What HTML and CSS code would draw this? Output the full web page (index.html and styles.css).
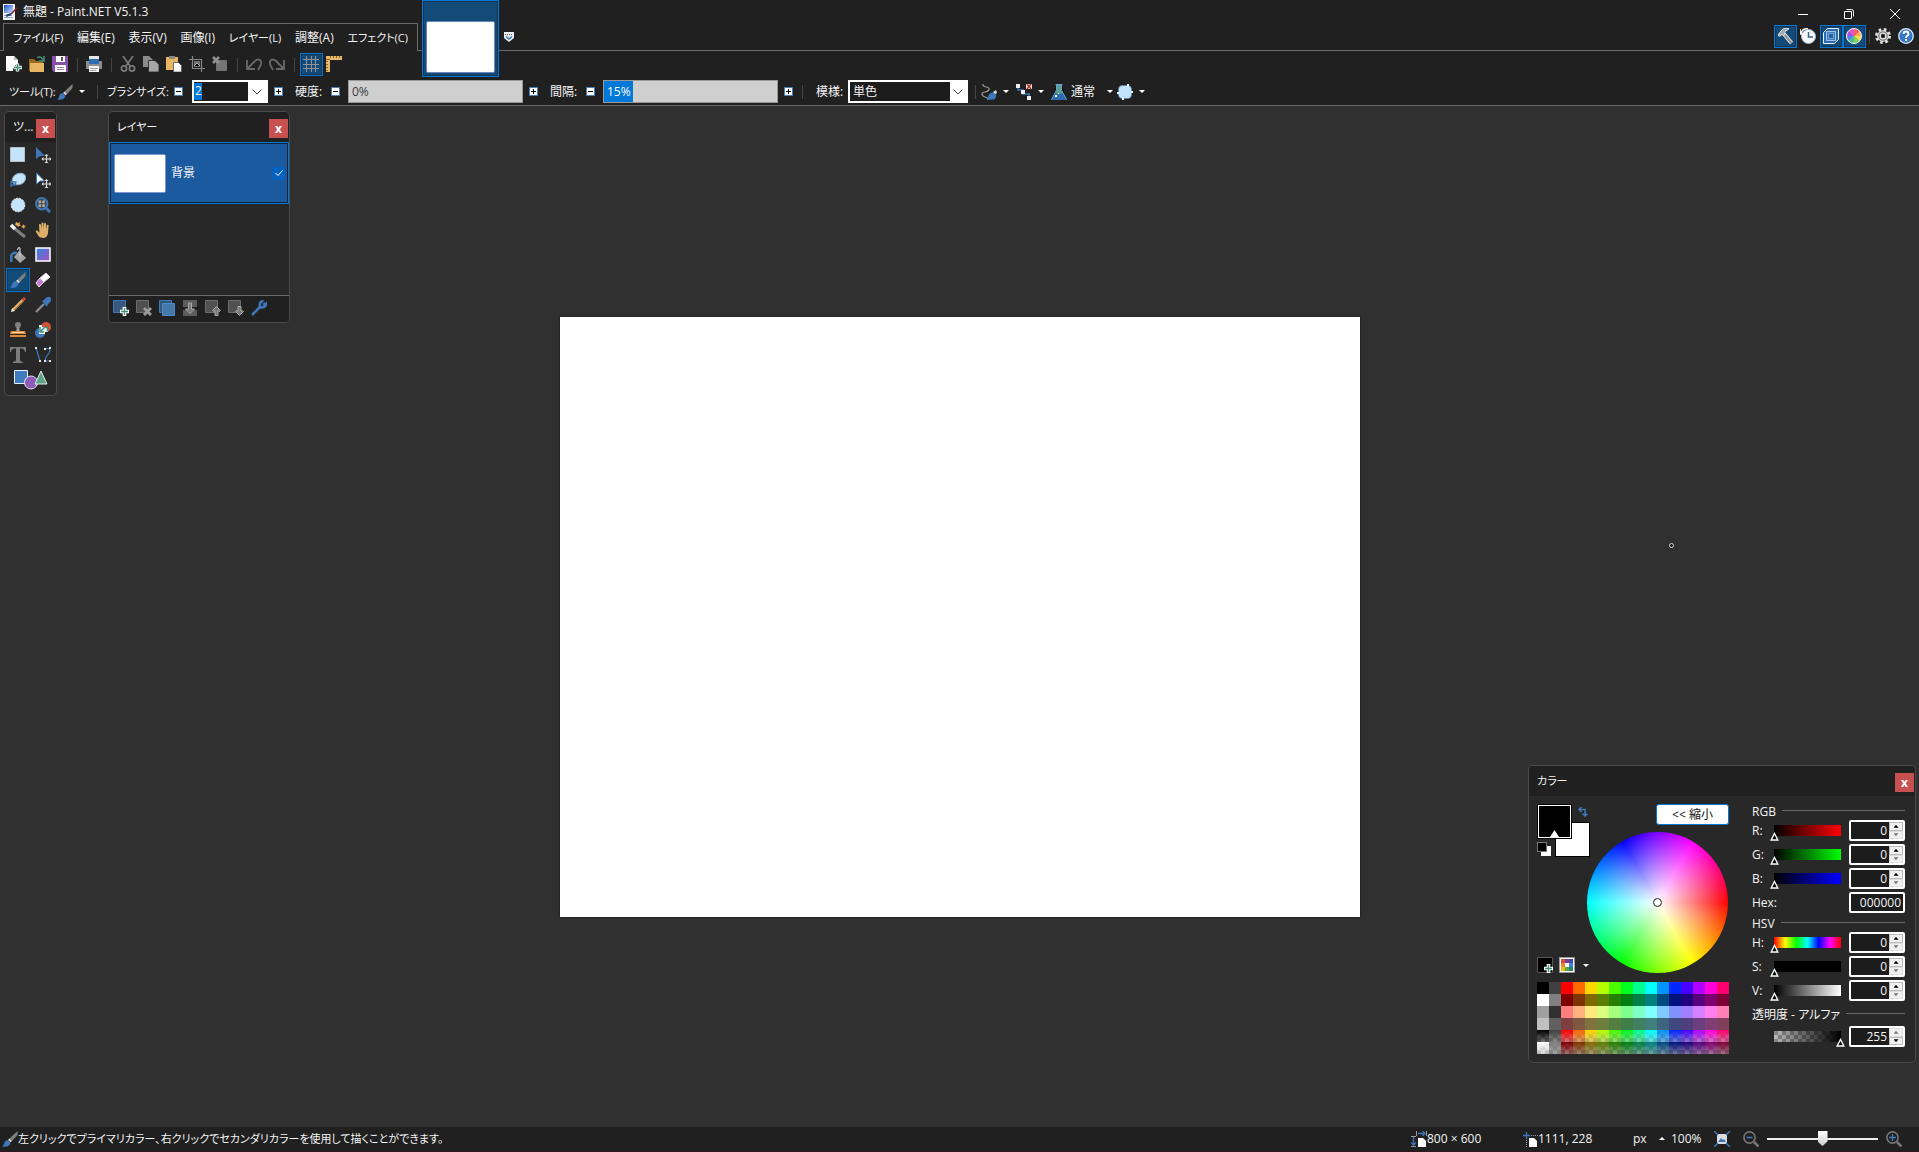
FILE: index.html
```html
<!DOCTYPE html>
<html lang="ja">
<head>
<meta charset="utf-8">
<title>無題 - Paint.NET V5.1.3</title>
<link rel="stylesheet" href="styles.css">
</head>
<body>
<svg class="sprite" aria-hidden="true">
  <defs>
    <linearGradient id="grad-sky" x1="0" y1="0" x2="1" y2="1"><stop offset="0" stop-color="#1b4fd0"/><stop offset="1" stop-color="#cfe4ff"/></linearGradient>
    <linearGradient id="grad-fill" x1="0" y1="0" x2="1" y2="1"><stop offset="0" stop-color="#2f86e0"/><stop offset="1" stop-color="#a94fc0"/></linearGradient>
  </defs>
  <symbol id="app" viewBox="0 0 16 16"><path fill="#f4f4f4" d="M1 0h12v16H1z"/><path fill="url(#grad-sky)" d="M2 1h9v8H2z"/><path fill="#9aa7c4" d="M2 11h8v1H2zM2 13h9v1H2z"/><path stroke="#8d1f24" stroke-width="1.6" d="M15 4L9 10"/><path stroke="#1c3f7c" stroke-width="2" d="M9 10l-5 2"/></symbol>
  <symbol id="new" viewBox="0 0 16 16"><path fill="#fff" d="M0 0h8l4 4v5H9v3H7v3H0z"/><path fill="#bbb" d="M8 0v4h4z"/><path stroke="#f4f4f4" stroke-width="3.4" d="M11.500 7.500v8M7.500 11.500h8.500"/><path stroke="#3e9079" stroke-width="1.400" d="M11.500 8v7M8 11.500h7.500"/></symbol>
  <symbol id="open" viewBox="0 0 16 16"><path fill="#9a6a1c" d="M0 3h5l2 2h7v10H0z"/><path fill="#e8b565" d="M1 7h14v9H1z"/><path fill="none" stroke="#3e9079" stroke-width="1.5" d="M8 1.500c3-1 5 0 6 2.500M15 0v5h-5"/></symbol>
  <symbol id="save" viewBox="0 0 16 16"><path fill="#8a4fa8" d="M0 0h16v16H2l-2-2z"/><path fill="#fff" d="M4 0h9v6H4zM3 9h11v7H3z"/><path fill="#555" d="M9 1h2v4H9z"/><path stroke="#9c8aa8" d="M5 11.500h7M5 13.500h7"/></symbol>
  <symbol id="print" viewBox="0 0 16 16"><path fill="#e8e8e8" d="M3 0h10v4H3z"/><path fill="#8e8e8e" d="M0 5h16v8H0z"/><path fill="#2d6fb6" d="M3 3h10v5H3z"/><path fill="#f5f5f5" d="M3 10h10v6H3z"/><path stroke="#a0a0a0" d="M4 12.500h8M4 14.500h6"/></symbol>
  <symbol id="cut" viewBox="0 0 16 16"><g fill="none" stroke="#777" stroke-width="1.800"><path d="M3 0l7 10M13 0L6 10"/><circle cx="4" cy="12.500" r="2.600"/><circle cx="12" cy="12.500" r="2.600"/></g></symbol>
  <symbol id="copy" viewBox="0 0 16 16"><path fill="#8b8b8b" d="M0 0h6l4 4v7H0z"/><path fill="#a6a6a6" stroke="#202020" stroke-width=".8" d="M5.500 4.500H12l4 4V16H5.500z"/></symbol>
  <symbol id="paste" viewBox="0 0 16 16"><path fill="#e8b565" d="M0 1h12v13H0z"/><path fill="#888" d="M3 0h6v3H3z"/><path fill="#fff" stroke="#555" stroke-width=".8" d="M7.500 6.500h5l3 3V16h-8z"/></symbol>
  <symbol id="crop" viewBox="0 0 16 16"><path fill="none" stroke="#858585" stroke-width="1.200" d="M3.500 0v12.500H16M0 3.500h12.500V16"/><path fill="#6f6f6f" d="M5 5h6v6H5z"/><path stroke="#aaa" d="M5 10l3-3 3 3"/></symbol>
  <symbol id="deselect" viewBox="0 0 16 16"><path fill="#767676" stroke="#999" stroke-dasharray="1 1" d="M4.500 4.500h10v10h-10z"/><path stroke="#909090" stroke-width="2.600" d="M1 1l6 6M7 1L1 7"/></symbol>
  <symbol id="undo" viewBox="0 0 16 16"><path fill="none" stroke="#686868" stroke-width="1.800" d="M1 4v9h8M1.500 12.500L9 5c3-3 7-1 6 3-.5 2-2 4-3 6"/></symbol>
  <symbol id="redo" viewBox="0 0 16 16"><path fill="none" stroke="#686868" stroke-width="1.800" d="M15 4v9H7M14.500 12.500L7 5C4 2 0 4 1 8c.5 2 2 4 3 6"/></symbol>
  <symbol id="grid" viewBox="0 0 16 16"><path stroke="#8f9396" d="M3.500 0v16M8.500 0v16M12.500 0v16M0 3.500h16M0 8.500h16M0 12.500h16"/></symbol>
  <symbol id="ruler" viewBox="0 0 16 16"><path fill="#e8b96c" d="M0 0h16v4H4v12H0z"/><path stroke="#856425" d="M4.500 0v2M7.500 0v2M10.500 0v2M13.500 0v2M0 5.500h2M0 8.500h2M0 11.500h2M0 14.500h2M0 3.500h4"/></symbol>
  <symbol id="brush" viewBox="0 0 16 16"><path fill="#808080" d="M15.500 0v4L10 10 7.500 7.500z"/><path fill="#d9d9d9" d="M7.500 7.500L10 10l-1.500 1.200L6 9z"/><path fill="#3e78b8" d="M5.800 9.300l2.600 2.400C8 15 4 16.500 0 15.500c2-.8 1.500-2.300 2.500-4.300.8-1.400 2.200-2 3.300-1.900z"/></symbol>
  <symbol id="curve" viewBox="0 0 16 16"><path fill="none" stroke="#999" stroke-width="1.200" d="M2 0C1 4 9 2 8 5.500S0 7 1 10.500s5 1.500 6 4.500"/><path fill="#3e78b8" d="M6 16c1-5 3-8 6.500-7.500S16 14 13 15.500z"/><path fill="#ddd" d="M12 8l3-2 1 3-2 1z"/></symbol>
  <symbol id="nodes" viewBox="0 0 16 16"><path fill="none" stroke="#3e78b8" stroke-width="1.500" d="M2 2v4h5v4h6v4"/><path fill="#eee" d="M0 0h4v4H0zM5 6h4v4H5zM11 12h4v4h-4z"/><path fill="#f4dedb" d="M10 0h6v5h-6z"/><path stroke="#a83a30" stroke-width="1.500" d="M11 0l4 5M15 0l-4 5"/></symbol>
  <symbol id="flask" viewBox="0 0 16 16"><path fill="#5aa38a" d="M6 1h4v5l3 5H3l3-5z"/><path fill="#2d6bb0" d="M4 9l4 1 4-1 4 7H0z"/><path stroke="#67a6e0" d="M4.500.5h7M5.500 1v5L.5 15.500M10.500 1v5l5 9.500"/><path fill="#fff" d="M4 11h2v2H4zM7 9h1v1H7z"/></symbol>
  <symbol id="blob" viewBox="0 0 16 16"><rect x="1.500" y="1.500" width="13" height="13" rx="4" fill="#c0e2fb" stroke="#4f86b8" stroke-dasharray="2 1"/><path fill="#f5fbff" d="M10 0h2v2h-2zM5 14h2v2H5zM0 8h2v2H0zM14 7h2v2h-2z"/></symbol>
  <symbol id="hammer" viewBox="0 0 16 16"><path stroke="#eee" stroke-width="4" d="M7 6l7.500 9"/><path stroke="#8e8e8e" stroke-width="2.200" d="M7 6l7.500 9"/><path fill="#a9a9a9" stroke="#f2f2f2" stroke-width=".9" d="M1 7l3-4C6 0 9 0 12 .8L7.500 4l1 2-2 1.500L5 6 3 8.500z"/></symbol>
  <symbol id="history" viewBox="0 0 16 16"><circle cx="8.500" cy="8.500" r="7" fill="#f6f8fb" stroke="#9fb7d6"/><path fill="none" stroke="#3f5f86" stroke-width="1.500" d="M8.500 4v5H13"/><path fill="none" stroke="#fff" stroke-width="1.500" d="M0 1v5h5M1 5c1-3 4-4.500 7-4.500"/></symbol>
  <symbol id="layers" viewBox="0 0 16 16"><path fill="#2d6bb0" stroke="#e8f1fa" d="M4.500.5h11v11l-4 4H.5v-11z"/><path fill="#3f7fc0" stroke="#9cc2e4" d="M3.500 3.500h9v9h-9z"/><path fill="#28609c" stroke="#6ea2d4" d="M5.500 5.500h5v5h-5z"/></symbol>
  <symbol id="help" viewBox="0 0 16 16"><circle cx="8" cy="8" r="7.300" fill="#3578c4" stroke="#dce9f8" stroke-width="1.300"/><path fill="none" stroke="#fff" stroke-width="1.900" d="M5.500 6c0-3.300 5-3.300 5 0 0 1.800-2.500 1.700-2.500 4M8 11v2"/></symbol>
  <symbol id="gear" viewBox="0 0 16 16"><circle cx="8" cy="8" r="6.500" fill="none" stroke="#ddd" stroke-width="3" stroke-dasharray="2.600 2.500"/><circle cx="8" cy="8" r="4" fill="none" stroke="#ececec" stroke-width="3.600"/><circle cx="8" cy="8" r="4.200" fill="none" stroke="#777" stroke-width="1.300"/></symbol>
  <symbol id="select-rect" viewBox="0 0 16 16"><path fill="#c4e4fc" stroke="#f5fbff" stroke-dasharray="1 1" d="M.5.5h14v14H.5z"/></symbol>
  <symbol id="lasso" viewBox="0 0 16 16"><ellipse cx="9" cy="7" rx="7" ry="5.500" transform="rotate(-28 9 7)" fill="#c4e4fc" stroke="#8db0cc"/><path fill="none" stroke="#3e78b8" stroke-width="1.300" d="M1 15V9.500l5 .5-1 3-4 0"/></symbol>
  <symbol id="ellipse" viewBox="0 0 16 16"><circle cx="8" cy="8" r="6.800" fill="#c4e4fc" stroke="#eef7ff" stroke-dasharray="2 1"/></symbol>
  <symbol id="wand" viewBox="0 0 16 16"><path stroke="#808080" stroke-width="3" d="M4 6l11 9"/><path stroke="#f0f0f0" stroke-width="3.500" d="M1 3l4 4"/><path fill="#e3ac55" d="M6 0l2 1 2-1-.5 2L11 4H9L8 5 7 3.500 5 3zM13 2l1 1.500 2 .5-1.500 1L14 7l-1.200-1.500L11 5l1.500-1z"/></symbol>
  <symbol id="bucket" viewBox="0 0 16 16"><path fill="#a5a5a5" d="M9 4l7 7-6 5-6-6z"/><path fill="none" stroke="#3e78b8" stroke-width="2.500" d="M1.300 15V8.500C1.500 6.500 4 5.500 7 6"/><path fill="none" stroke="#ccc" stroke-width="1.200" d="M10 10V2c0-2-2-2-2.500 1"/></symbol>
  <symbol id="pencil" viewBox="0 0 16 16"><path stroke="#e8b565" stroke-width="3" d="M3 13L13 3"/><path stroke="#a87a34" d="M3 14L13.500 3.500"/><path stroke="#d34a30" stroke-width="3" d="M12.500 3.500L15 1"/><path fill="#eee" d="M1 15l1-4 3 3z"/></symbol>
  <symbol id="stamp" viewBox="0 0 16 16"><circle cx="8" cy="3" r="3" fill="#808080"/><path fill="#9b9b9b" d="M7 5h2l1 5H6z"/><path fill="#e08a3c" d="M1 9h14l1 3H0zM0 13h16v2H0z"/><path stroke="#f5d3ad" d="M2 10.500h12"/></symbol>
  <symbol id="text" viewBox="0 0 16 16"><path fill="#7d7d7d" d="M0 0h16v5h-1c-.5-3-1.500-3.600-5-3.600v11c0 1.600.5 2 2.500 2.200V16H3v-1.400C5.500 14.400 6 14 6 12.400v-11C2.500 1.400 1.500 2 1 5H0z"/></symbol>
  <symbol id="move" viewBox="0 0 16 16"><path fill="#3e78b8" d="M1 0l9 9H5l-4 3z"/><path fill="none" stroke="#ddd" stroke-width="1.200" d="M11.500 8v8M7.500 12h8"/><path fill="#ddd" d="M11.500 7l2 2h-4zM11.500 17l2-2h-4zM6.500 12l2-2v4zM16.500 12l-2-2v4z"/></symbol>
  <symbol id="move-sel" viewBox="0 0 16 16"><path fill="#fff" stroke="#3e78b8" d="M1.500 1l8 8H5l-3.500 3z"/><path fill="none" stroke="#ddd" stroke-width="1.200" d="M11.500 8v8M7.500 12h8"/><path fill="#ddd" d="M11.500 7l2 2h-4zM11.500 17l2-2h-4zM6.500 12l2-2v4zM16.500 12l-2-2v4z"/></symbol>
  <symbol id="magnify" viewBox="0 0 16 16"><path stroke="#3e78b8" stroke-width="3" d="M11 11l4 4"/><circle cx="6.700" cy="6.700" r="5.700" fill="#444" stroke="#3e78b8" stroke-width="2"/><path fill="#aaa" d="M3.500 3.500h2.700v2.700H3.500zM7.200 3.500h2.700v2.700H7.200zM3.500 7.200h2.700v2.700H3.500zM7.200 7.200h2.700v2.700H7.200z"/></symbol>
  <symbol id="hand" viewBox="0 0 16 16"><path fill="#dcae66" d="M4 3c0-1.300 1.800-1.300 2 0l.5 4V1.500c0-1.300 2-1.300 2 0V7l.5-5c.2-1.300 2-1.300 2 0v5.500l.7-4c.2-1.200 2-1 1.900.3L13 11c-.3 3-2 5-5 5-4 0-5-3-7-6-.7-1.200.8-2 1.700-1.200L4.500 11z"/></symbol>
  <symbol id="gradient" viewBox="0 0 16 16"><path fill="url(#grad-fill)" stroke="#fff" stroke-width="1.500" d="M1 1h14v13H1z"/></symbol>
  <symbol id="eraser" viewBox="0 0 16 16"><path fill="#fff" stroke="#e6d9ec" d="M11 1l4 4-6 5-4-4z"/><path fill="#c37ad0" stroke="#f3e4f7" d="M5 6l4 4-5 5-3-4z"/></symbol>
  <symbol id="picker" viewBox="0 0 16 16"><path stroke="#8a8a8a" stroke-width="2.400" d="M1 15l8-8"/><path fill="#3e78b8" d="M7 4l2-1c2-3 5-4 6.500-2.500S16 5 13 7l-1 3z"/></symbol>
  <symbol id="recolor" viewBox="0 0 16 16"><circle cx="11" cy="5" r="5" fill="#d2553a"/><circle cx="5" cy="11" r="5" fill="#3e78b8"/><path fill="#f2f6f4" d="M4 3h3v2h6v5h-3v2H4z"/><path fill="none" stroke="#3e9079" stroke-width="1.400" d="M5 5v5h4M5.500 9.500l4-4h3v4"/></symbol>
  <symbol id="line" viewBox="0 0 16 16"><path fill="none" stroke="#3e78b8" stroke-width="1.200" d="M1 1l4 13M10 2c4-2 6 1 4 4s-4 4-4 8h5"/><path fill="#e8e8e8" d="M0 0h2v2H0zM4 13h2v2H4zM9 1h2v2H9zM14 0h2v2h-2zM9 13h2v2H9zM14 13h2v2h-2z"/></symbol>
  <symbol id="shapes" viewBox="0 0 34 20"><path fill="#3e7cbf" stroke="#e6eff8" d="M.5.500h13v13H.5z"/><circle cx="17" cy="12.500" r="6.500" fill="#8e5cb8" stroke="#ece0f5"/><path fill="#5da48b" stroke="#dff0ea" d="M27 1l6 13H21z"/></symbol>
  <symbol id="layer-add" viewBox="0 0 16 16"><path fill="#38597c" stroke="#3e78b8" d="M.5.5h12v12H.5z"/><path stroke="#fff" stroke-width="3.600" d="M11.500 7v9M7 11.500h9"/><path stroke="#3e9079" stroke-width="1.300" d="M11.500 8v7M8 11.500h7"/></symbol>
  <symbol id="layer-del" viewBox="0 0 16 16"><path fill="#505050" stroke="#6d6d6d" d="M.5.5h12v12H.5z"/><path stroke="#999" stroke-width="3" d="M8 8l7 7M15 8l-7 7"/></symbol>
  <symbol id="layer-dup" viewBox="0 0 16 16"><path fill="#30577f" stroke="#3e78b8" d="M.5.5h12v12H.5z"/><path fill="#4577a9" stroke="#4b8bcc" d="M3.500 3.500h12v12h-12z"/></symbol>
  <symbol id="layer-merge" viewBox="0 0 16 16"><path fill="#5c5c5c" d="M1 0h14v7H1zM1 10h14v6H1z"/><path fill="#777" stroke="#aaa" d="M6.500 3h3v6h3L8 13.500 3.500 9h3z"/></symbol>
  <symbol id="layer-up" viewBox="0 0 16 16"><path fill="#505050" stroke="#6d6d6d" d="M.5.5h12v12H.5z"/><path fill="#777" stroke="#aaa" d="M11.500 6.500l4 4-1 1-1.500-1V15.500h-3v-5l-1.500 1-1-1z"/></symbol>
  <symbol id="layer-down" viewBox="0 0 16 16"><path fill="#505050" stroke="#6d6d6d" d="M.5.5h12v12H.5z"/><path fill="#777" stroke="#aaa" d="M11.500 15.500l4-4-1-1-1.500 1V6.500h-3v5l-1.500-1-1 1z"/></symbol>
  <symbol id="wrench" viewBox="0 0 16 16"><path stroke="#3e78b8" stroke-width="2.600" d="M1 15l8-8"/><path fill="none" stroke="#3e78b8" stroke-width="2.600" d="M12.500 1C9 1 8.500 4 9 7c3 1 6 0 6-3.500L12 5"/></symbol>
  <symbol id="swap" viewBox="0 0 10 10"><path fill="none" stroke="#3e78b8" stroke-width="1.500" d="M3.500 0L1 2.500 3.500 5M1 2.500h6v6M4.500 6.500L7 9l2.500-2.500"/></symbol>
  <symbol id="swatch-add" viewBox="0 0 16 16"><path fill="#000" stroke="#555" d="M.5.5h15v15H.5z"/><path stroke="#fff" stroke-width="3.600" d="M11.500 7v9M7 11.500h9"/><path stroke="#3e9079" stroke-width="1.300" d="M11.500 8v7M8 11.500h7"/></symbol>
  <symbol id="palette" viewBox="0 0 16 16"><path fill="#fff" stroke="#999" d="M.5.5h15v15H.5z"/><path fill="#d94b3c" d="M2 2h4v4H2z"/><path fill="#7a3a9c" d="M6 2h4v4H6z"/><path fill="#3f49a8" d="M10 2h4v4h-4z"/><path fill="#ee8630" d="M2 6h4v4H2z"/><path fill="#3f7ce0" d="M10 6h4v4h-4z"/><path fill="#f2b91c" d="M2 10h4v4H2z"/><path fill="#58a845" d="M6 10h4v4H6z"/><path fill="#22856e" d="M10 10h4v4h-4z"/></symbol>
  <symbol id="size" viewBox="0 0 16 16"><path fill="none" stroke="#3e78b8" stroke-width="1.300" d="M7 2.500h7M11.500 0L14 2.500 11.500 5M2.500 6v8M0 11.500L2.500 14 5 11.500"/><path stroke="#999" d="M5.500 0v5M15.500 0v5M0 5.500h5M0 15.500h5"/><path fill="#fff" d="M7 7h5l3 3v6H7z"/></symbol>
  <symbol id="position" viewBox="0 0 16 16"><path stroke="#999" stroke-dasharray="1 1" d="M5 4.500h11M4.500 5v11"/><path stroke="#3e78b8" stroke-width="1.300" d="M4.500 1v7M1 4.500h7"/><path fill="#fff" d="M7 7h5l3 3v6H7z"/></symbol>
  <symbol id="fit" viewBox="0 0 16 16"><path fill="#d7dde2" d="M3 3h10v10H3z"/><path fill="#4374a8" d="M4 11l3-4 2 2 1-1 2 3z"/><path stroke="#3e78b8" stroke-width="1.500" d="M0 0l4 4M16 0l-4 4M0 16l4-4M16 16l-4-4"/></symbol>
  <symbol id="zoom-out" viewBox="0 0 16 16"><path stroke="#777" stroke-width="2.600" d="M11 11l4.500 4.500"/><circle cx="6.500" cy="6.500" r="5.600" fill="none" stroke="#777" stroke-width="1.600"/><path stroke="#3e78b8" stroke-width="1.500" d="M3.500 6.500h6"/></symbol>
  <symbol id="zoom-in" viewBox="0 0 16 16"><path stroke="#777" stroke-width="2.600" d="M11 11l4.500 4.500"/><circle cx="6.500" cy="6.500" r="5.600" fill="none" stroke="#777" stroke-width="1.600"/><path stroke="#3e78b8" stroke-width="1.500" d="M3 6.500h7M6.500 3v7"/></symbol>
  <symbol id="minus" viewBox="0 0 9 9"><path fill="#fff" stroke="#4a7fb5" d="M.5.5h8v8h-8z"/><path stroke="#000" d="M2 4.500h5"/></symbol>
  <symbol id="plus" viewBox="0 0 9 9"><path fill="#fff" stroke="#4a7fb5" d="M.5.5h8v8h-8z"/><path stroke="#000" d="M2 4.500h5M4.500 2v5"/></symbol>
  <symbol id="down" viewBox="0 0 6 3"><path fill="#fff" d="M0 0h6L3 3z"/></symbol>
  <symbol id="up" viewBox="0 0 6 3"><path fill="#fff" d="M0 3h6L3 0z"/></symbol>
  <symbol id="chevron" viewBox="0 0 10 6"><path fill="none" stroke="#444" d="M.5.5L5 5 9.500.5"/></symbol>
  <symbol id="list" viewBox="0 0 10 10"><path fill="#e8eef4" d="M0 0h10v6L5 10 0 6z"/><path stroke="#555" stroke-dasharray="1 1" d="M1 2.500h8"/><path fill="none" stroke="#3e78b8" stroke-width="1.500" d="M2 4.500l3 2.500 3-2.500"/></symbol>
  <symbol id="minimize" viewBox="0 0 10 10"><path stroke="#fff" d="M0 5.500h10"/></symbol>
  <symbol id="restore" viewBox="0 0 10 10"><path fill="none" stroke="#fff" d="M.5 2.500h7v7h-7zM2.500.5h5a2 2 0 0 1 2 2v5"/></symbol>
  <symbol id="close" viewBox="0 0 10 10"><path stroke="#fff" d="M0 0l10 10M10 0L0 10"/></symbol>
</svg>

<div class="app">
  <header class="chrome">
    <div class="title-bar">
      <svg class="icon"><use href="#app"/></svg>
      <h1 class="title">無題 - Paint.NET V5.1.3</h1>
      <div class="window-buttons">
        <button aria-label="最小化"><svg class="glyph"><use href="#minimize"/></svg></button>
        <button aria-label="元に戻す"><svg class="glyph"><use href="#restore"/></svg></button>
        <button aria-label="閉じる"><svg class="glyph"><use href="#close"/></svg></button>
      </div>
    </div>
    <div class="menu-row">
      <nav class="menu">
        <button class="kana">ファイル(F)</button><button>編集(E)</button><button>表示(V)</button><button>画像(I)</button><button class="kana">レイヤー(L)</button><button>調整(A)</button><button class="kana">エフェクト(C)</button>
      </nav>
      <div class="utility">
        <button class="tool on" aria-label="ツール"><svg class="icon"><use href="#hammer"/></svg></button>
        <button class="tool" aria-label="履歴"><svg class="icon"><use href="#history"/></svg></button>
        <button class="tool on" aria-label="レイヤー"><svg class="icon"><use href="#layers"/></svg></button>
        <button class="tool on" aria-label="カラー"><span class="mini-wheel"></span></button>
        <span class="separator narrow"></span>
        <button class="tool" aria-label="設定"><svg class="icon"><use href="#gear"/></svg></button>
        <button class="tool" aria-label="ヘルプ"><svg class="icon"><use href="#help"/></svg></button>
      </div>
    </div>
    <div class="toolbar">
      <button class="tool" aria-label="新規"><svg class="icon"><use href="#new"/></svg></button>
      <button class="tool" aria-label="開く"><svg class="icon"><use href="#open"/></svg></button>
      <button class="tool" aria-label="保存"><svg class="icon"><use href="#save"/></svg></button>
      <span class="separator"></span>
      <button class="tool" aria-label="印刷"><svg class="icon"><use href="#print"/></svg></button>
      <span class="separator"></span>
      <button class="tool" aria-label="切り取り"><svg class="icon"><use href="#cut"/></svg></button>
      <button class="tool" aria-label="コピー"><svg class="icon"><use href="#copy"/></svg></button>
      <button class="tool" aria-label="貼り付け"><svg class="icon"><use href="#paste"/></svg></button>
      <button class="tool" aria-label="トリミング"><svg class="icon"><use href="#crop"/></svg></button>
      <button class="tool" aria-label="選択解除"><svg class="icon"><use href="#deselect"/></svg></button>
      <span class="separator"></span>
      <button class="tool" aria-label="元に戻す"><svg class="icon"><use href="#undo"/></svg></button>
      <button class="tool" aria-label="やり直し"><svg class="icon"><use href="#redo"/></svg></button>
      <span class="separator"></span>
      <button class="tool on" aria-label="グリッド"><svg class="icon"><use href="#grid"/></svg></button>
      <button class="tool" aria-label="ルーラー"><svg class="icon"><use href="#ruler"/></svg></button>
    </div>
    <div class="options">
      <button class="pick tool-pick"><span class="pick-label kana">ツール(T):</span><svg class="icon"><use href="#brush"/></svg><svg class="arrow"><use href="#down"/></svg></button>
      <span class="separator wide"></span>
      <label class="label-long kana" for="brush-size">ブラシサイズ:</label>
      <button class="step" aria-label="細く"><svg><use href="#minus"/></svg></button>
      <div class="combo">
        <input id="brush-size" value="2"><span class="selection">2</span>
        <button aria-label="サイズ一覧"><svg class="chevron"><use href="#chevron"/></svg></button>
      </div>
      <button class="step" aria-label="太く"><svg><use href="#plus"/></svg></button>
      <label class="label" for="hardness">硬度:</label>
      <button class="step" aria-label="硬度を下げる"><svg><use href="#minus"/></svg></button>
      <div class="bar"><input id="hardness" type="range" value="0" style="--fill:0%"><output>0%</output></div>
      <button class="step" aria-label="硬度を上げる"><svg><use href="#plus"/></svg></button>
      <label class="label" for="spacing">間隔:</label>
      <button class="step" aria-label="間隔を下げる"><svg><use href="#minus"/></svg></button>
      <div class="bar filled"><input id="spacing" type="range" value="15" style="--fill:17%"><output>15%</output></div>
      <button class="step" aria-label="間隔を上げる"><svg><use href="#plus"/></svg></button>
      <span class="separator wide"></span>
      <label class="label-tight" for="fill-style">模様:</label>
      <select id="fill-style"><option>単色</option></select>
      <span class="separator"></span>
      <button class="pick" aria-label="平滑化"><svg class="icon"><use href="#curve"/></svg><svg class="arrow"><use href="#down"/></svg></button>
      <button class="pick" aria-label="アンチエイリアス"><svg class="icon"><use href="#nodes"/></svg><svg class="arrow"><use href="#down"/></svg></button>
      <button class="pick"><svg class="icon"><use href="#flask"/></svg><span class="mode">通常</span><svg class="arrow"><use href="#down"/></svg></button>
      <button class="pick" aria-label="選択範囲クリッピング"><svg class="icon"><use href="#blob"/></svg><svg class="arrow"><use href="#down"/></svg></button>
    </div>
    <div class="documents">
      <button class="document" aria-label="無題"><span class="document-thumb"></span></button>
      <button class="document-list" aria-label="画像一覧"><svg class="glyph"><use href="#list"/></svg></button>
    </div>
  </header>

  <main class="workspace">
    <div class="canvas"></div>
    <span class="brush-cursor"></span>

    <section class="panel tools-panel">
      <header class="panel-head"><h2>ツ...</h2><button class="panel-close" aria-label="閉じる">x</button></header>
      <div class="tool-grid">
        <button class="cell" aria-label="四角形選択"><svg class="icon"><use href="#select-rect"/></svg></button>
        <button class="cell" aria-label="移動"><svg class="icon"><use href="#move"/></svg></button>
        <button class="cell" aria-label="投げ縄"><svg class="icon"><use href="#lasso"/></svg></button>
        <button class="cell" aria-label="選択範囲の移動"><svg class="icon"><use href="#move-sel"/></svg></button>
        <button class="cell" aria-label="楕円選択"><svg class="icon"><use href="#ellipse"/></svg></button>
        <button class="cell" aria-label="ズーム"><svg class="icon"><use href="#magnify"/></svg></button>
        <button class="cell" aria-label="魔法の杖"><svg class="icon"><use href="#wand"/></svg></button>
        <button class="cell" aria-label="パン"><svg class="icon"><use href="#hand"/></svg></button>
        <button class="cell" aria-label="塗りつぶし"><svg class="icon"><use href="#bucket"/></svg></button>
        <button class="cell" aria-label="グラデーション"><svg class="icon"><use href="#gradient"/></svg></button>
        <button class="cell on" aria-label="ペイントブラシ"><svg class="icon"><use href="#brush"/></svg></button>
        <button class="cell" aria-label="消しゴム"><svg class="icon"><use href="#eraser"/></svg></button>
        <button class="cell" aria-label="鉛筆"><svg class="icon"><use href="#pencil"/></svg></button>
        <button class="cell" aria-label="カラーピッカー"><svg class="icon"><use href="#picker"/></svg></button>
        <button class="cell" aria-label="クローンスタンプ"><svg class="icon"><use href="#stamp"/></svg></button>
        <button class="cell" aria-label="色の変更"><svg class="icon"><use href="#recolor"/></svg></button>
        <button class="cell" aria-label="テキスト"><svg class="icon"><use href="#text"/></svg></button>
        <button class="cell" aria-label="直線/曲線"><svg class="icon"><use href="#line"/></svg></button>
        <button class="cell double" aria-label="図形"><svg class="shapes"><use href="#shapes"/></svg></button>
      </div>
    </section>

    <section class="panel layers-panel">
      <header class="panel-head"><h2 class="kana">レイヤー</h2><button class="panel-close" aria-label="閉じる">x</button></header>
      <div class="layer-list">
        <div class="layer">
          <span class="layer-thumb"></span>
          <label for="layer-visible">背景</label>
          <input id="layer-visible" type="checkbox" checked>
        </div>
      </div>
      <footer class="layer-actions">
        <button class="tool" aria-label="追加"><svg class="icon"><use href="#layer-add"/></svg></button>
        <button class="tool" aria-label="削除"><svg class="icon"><use href="#layer-del"/></svg></button>
        <button class="tool" aria-label="複製"><svg class="icon"><use href="#layer-dup"/></svg></button>
        <button class="tool" aria-label="結合"><svg class="icon"><use href="#layer-merge"/></svg></button>
        <button class="tool" aria-label="上へ"><svg class="icon"><use href="#layer-up"/></svg></button>
        <button class="tool" aria-label="下へ"><svg class="icon"><use href="#layer-down"/></svg></button>
        <button class="tool" aria-label="プロパティ"><svg class="icon"><use href="#wrench"/></svg></button>
      </footer>
    </section>

    <section class="panel colors-panel">
      <header class="panel-head"><h2 class="kana">カラー</h2><button class="panel-close" aria-label="閉じる">x</button></header>
      <div class="colors-body">
        <div class="mixer">
          <div class="swatch-column">
            <div class="swatches">
              <button class="secondary" aria-label="セカンダリ"></button>
              <button class="primary" aria-label="プライマリ"></button>
              <button class="swap" aria-label="入れ替え"><svg class="glyph"><use href="#swap"/></svg></button>
              <button class="reset" aria-label="白黒に戻す"></button>
            </div>
            <div class="palette-actions">
              <button aria-label="パレットに追加"><svg class="icon"><use href="#swatch-add"/></svg></button>
              <button class="palette-menu" aria-label="パレット"><svg class="icon"><use href="#palette"/></svg><svg class="arrow"><use href="#down"/></svg></button>
            </div>
          </div>
          <div class="wheel-column">
            <button class="less">&lt;&lt; 縮小</button>
            <div class="wheel"><span class="wheel-mark"></span></div>
          </div>
          <div class="palette" id="palette-grid"></div>
        </div>
        <div class="channels">
          <h3 class="channel-head">RGB</h3>
          <div class="channel"><label for="r">R:</label><input type="range" max="255" value="0" class="ramp red" aria-label="R"><div class="number"><input id="r" value="0"><span class="spin"><button aria-label="増"></button><button class="low" aria-label="減" disabled></button></span></div></div>
          <div class="channel"><label for="g">G:</label><input type="range" max="255" value="0" class="ramp green" aria-label="G"><div class="number"><input id="g" value="0"><span class="spin"><button aria-label="増"></button><button class="low" aria-label="減" disabled></button></span></div></div>
          <div class="channel"><label for="b">B:</label><input type="range" max="255" value="0" class="ramp blue" aria-label="B"><div class="number"><input id="b" value="0"><span class="spin"><button aria-label="増"></button><button class="low" aria-label="減" disabled></button></span></div></div>
          <div class="channel hex"><label for="hex">Hex:</label><div class="number"><input id="hex" value="000000"></div></div>
          <h3 class="channel-head hsv-head">HSV</h3>
          <div class="channel"><label for="h">H:</label><input type="range" max="360" value="0" class="ramp hue" aria-label="H"><div class="number"><input id="h" value="0"><span class="spin"><button aria-label="増"></button><button class="low" aria-label="減" disabled></button></span></div></div>
          <div class="channel"><label for="s">S:</label><input type="range" value="0" class="ramp sat" aria-label="S"><div class="number"><input id="s" value="0"><span class="spin"><button aria-label="増"></button><button class="low" aria-label="減" disabled></button></span></div></div>
          <div class="channel"><label for="v">V:</label><input type="range" value="0" class="ramp val" aria-label="V"><div class="number"><input id="v" value="0"><span class="spin"><button aria-label="増"></button><button class="low" aria-label="減" disabled></button></span></div></div>
          <h3 class="channel-head alpha-head">透明度 - アルファ</h3>
          <div class="channel"><span></span><input type="range" max="255" value="255" class="ramp alpha" aria-label="アルファ"><div class="number"><input id="a" value="255" aria-label="アルファ値"><span class="spin"><button aria-label="増" disabled></button><button class="low" aria-label="減"></button></span></div></div>
        </div>
      </div>
    </section>
  </main>

  <footer class="status">
    <svg class="icon"><use href="#brush"/></svg>
    <p class="hint">左クリックでプライマリカラー、右クリックでセカンダリカラーを使用して描くことができます。</p>
    <span class="readout"><svg class="icon"><use href="#size"/></svg>800 × 600</span>
    <span class="readout"><svg class="icon"><use href="#position"/></svg>1111, 228</span>
    <button class="unit">px <svg class="arrow"><use href="#up"/></svg></button>
    <span class="percent">100%</span>
    <button aria-label="ウィンドウに合わせる"><svg class="icon"><use href="#fit"/></svg></button>
    <button aria-label="縮小"><svg class="icon"><use href="#zoom-out"/></svg></button>
    <input class="zoom" type="range" value="50" aria-label="ズーム">
    <button aria-label="拡大"><svg class="icon"><use href="#zoom-in"/></svg></button>
  </footer>
</div>
<script src="script.js"></script>
</body>
</html>
```

FILE: styles.css
```css
* { box-sizing: border-box; }

body {
  margin: 0;
  background: #303030;
  color: #f4f4f4;
  font: 12px/16px "Open Sans", "Noto Sans CJK JP", sans-serif;
  font-feature-settings: "palt";
}

h1, h2, h3, p { margin: 0; font-size: 12px; font-weight: 400; }

button, input, select {
  margin: 0;
  padding: 0;
  border: 0;
  border-radius: 0;
  background: none;
  color: inherit;
  font: inherit;
  font-feature-settings: inherit;
}

button { display: flex; align-items: center; justify-content: center; flex: none; white-space: nowrap; }
svg { flex: none; display: block; }
.sprite { position: absolute; width: 0; height: 0; }
.icon { width: 16px; height: 16px; }
.glyph { width: 10px; height: 10px; }
.arrow { width: 6px; height: 3px; }
.chevron { width: 10px; height: 6px; }
.kana { font-size: 11px; }

.app { display: flex; flex-direction: column; height: 100vh; }

/* Window chrome */
.chrome { position: relative; background: #202020; border-bottom: 1px solid #6a6a6a; }
.title-bar { display: flex; align-items: center; gap: 5px; height: 23px; padding-left: 2px; }
.title { flex: 1; }
.window-buttons { display: flex; padding: 5px 1px 0 0; }
.window-buttons button { width: 46px; height: 18px; }

.menu-row { display: flex; height: 28px; }
.menu-row::before { content: ""; width: 3px; border-bottom: 1px solid #6a6a6a; }
.menu {
  display: flex;
  justify-content: space-between;
  width: 415px;
  padding: 0 9px;
  border: 1px solid #6a6a6a;
  border-bottom: 0;
}
.utility {
  display: flex;
  flex: 1;
  justify-content: flex-end;
  padding: 2px 1px 0 0;
  border-bottom: 1px solid #6a6a6a;
}
.tool { width: 23px; height: 23px; padding: 0 1px 1px 0; border: 1px solid transparent; }
.tool.on, .cell.on { border-color: #0078d7; background: #134b78; box-shadow: inset 0 0 0 1px #17334d; }
.mini-wheel {
  width: 16px;
  height: 16px;
  border: 1px solid #fff;
  border-radius: 50%;
  background: conic-gradient(#ff5c64 0 45deg, #ffae55 0 90deg, #f7dd50 0 135deg, #7bd65c 0 180deg, #50bc8c 0 225deg, #5a82ee 0 270deg, #9f50e0 0 315deg, #dc57d0 0);
}
.separator { flex: none; width: 11px; height: 14px; background: linear-gradient(#454545, #454545) center / 1px 100% no-repeat; }
.separator.narrow { width: 6px; margin-top: 5px; }
.separator.wide { width: 19px; }

.toolbar { display: flex; align-items: center; padding: 2px 3px 4px; }

.options { display: flex; align-items: center; padding: 0 9px 2px; height: 25px; }
.options label { flex: none; white-space: nowrap; }
.pick { gap: 6px; width: 35px; justify-content: flex-start; }
.pick:has(.mode) { width: 66px; }
.mode { width: 30px; margin-left: -2px; text-align: left; }
.tool-pick { width: 79px; }
.pick-label { width: 42px; text-align: left; }
.label-long { width: 67px; }
.label { width: 36px; margin-left: 12px; }
.label-tight { width: 36px; padding-left: 4px; }
.step { width: 9px; height: 9px; }
.step svg { width: 9px; height: 9px; }
.combo { position: relative; display: flex; width: 76px; height: 23px; margin: 0 6px 0 9px; border: 2px solid #fff; background: #fff; }
.combo input { flex: 1; min-width: 0; background: #1c1c1c; padding-left: 1px; }
.combo button { width: 18px; }
.selection { position: absolute; left: 0; top: 1px; width: 8px; height: 17px; padding-left: 1px; background: #0078d7; }
.bar { position: relative; width: 175px; height: 23px; margin: 0 6px 0 8px; }
.bar input {
  display: block;
  appearance: none;
  width: 100%;
  height: 100%;
  border: 1px solid #999;
  background: linear-gradient(90deg, #0078d7 var(--fill), #cfcfcf var(--fill));
}
.bar input::-webkit-slider-thumb { appearance: none; width: 0; height: 0; }
.bar output { position: absolute; left: 4px; top: 4px; color: #3a3a3a; }
.bar.filled output { color: #fff; }
select {
  appearance: none;
  width: 120px;
  height: 23px;
  margin-right: 2px;
  padding-left: 3px;
  border: 2px solid #fff;
  background:
    url("data:image/svg+xml,%3Csvg xmlns='http://www.w3.org/2000/svg' width='10' height='6'%3E%3Cpath fill='none' stroke='%23444' d='M.5.5L5 5 9.500.5'/%3E%3C/svg%3E") right 3px center no-repeat,
    linear-gradient(#fff, #fff) right / 16px 100% no-repeat,
    #1c1c1c;
}

.documents { position: absolute; left: 422px; top: 0; display: flex; align-items: flex-start; gap: 5px; }
.document {
  width: 77px;
  height: 77px;
  padding: 16px 0 0;
  border: 1px solid #0078d7;
  background: #134b78;
  box-shadow: inset 0 0 0 1px #17334d;
}
.document-thumb { width: 69px; height: 52px; border: 1px solid #6b86b5; border-radius: 2px; background: #fff; }
.document-list { padding-top: 32px; }

/* Workspace */
.workspace { position: relative; display: flex; flex: 1; align-items: center; justify-content: center; background: #303030; }
.canvas { width: 800px; height: 600px; background: #fff; box-shadow: 0 0 2px #111; }
.brush-cursor { position: absolute; left: 1669px; top: 437px; width: 5px; height: 5px; border: 1px solid #ddd; border-radius: 50%; background: #000; }

.panel { position: absolute; top: 5px; border: 1px solid #4a4a4a; border-radius: 5px; background: #282828; overflow: hidden; }
.panel-head { display: flex; align-items: center; justify-content: space-between; height: 30px; padding: 0 1px 0 8px; background: #202020; }
.panel-close { width: 19px; height: 19px; margin-top: 3px; background: #c75050; color: #fff; font-weight: 700; }
.tools-panel { left: 4px; width: 53px; }
.tool-grid { display: grid; grid-template-columns: 24px 24px; gap: 1px; padding: 1px 1px 3px; }
.cell { height: 24px; border: 1px solid transparent; }
.cell.double { grid-column: span 2; }
.shapes { width: 34px; height: 20px; }

.layers-panel { left: 108px; width: 182px; }
.layer-list { height: 154px; border-bottom: 1px solid #6a6a6a; }
.layer {
  display: flex;
  align-items: center;
  gap: 5px;
  height: 62px;
  padding: 0 3px 0 4px;
  border: 1px solid #0078d7;
  background: #1b5a9f;
  box-shadow: inset 0 0 0 1px #14243a;
}
.layer-thumb { width: 52px; height: 39px; border: 1px solid #7f95cf; border-radius: 2px; background: #fff; }
.layer label { flex: 1; }
.layer input {
  appearance: none;
  width: 13px;
  height: 13px;
  border-radius: 3px;
  background: url("data:image/svg+xml,%3Csvg xmlns='http://www.w3.org/2000/svg' width='8' height='6'%3E%3Cpath fill='none' stroke='%23fff' d='M.5 3L3 5.500 7.500.5'/%3E%3C/svg%3E") center no-repeat, #0562c1;
}
.layer-actions { display: flex; padding: 1px 1px 2px; background: #202020; }

/* Colours */
.colors-panel { left: auto; top: auto; right: 3px; bottom: 64px; width: 388px; }
.colors-body { display: flex; justify-content: space-between; padding: 8px 10px 8px 8px; }
.mixer { display: grid; grid-template-columns: 50px 142px; row-gap: 9px; width: 192px; }
.swatch-column { display: flex; flex-direction: column; justify-content: space-between; }
.swatches { position: relative; height: 53px; }
.swatches button { position: absolute; }
.primary, .secondary { width: 35px; height: 35px; border: 1px solid #000; box-shadow: inset 0 0 0 1px #fff; }
.primary { left: 0; top: 0; background: #000; }
.primary::after { content: ""; align-self: flex-end; width: 9px; height: 7px; margin-bottom: 1px; background: #fff; clip-path: polygon(50% 0, 100% 100%, 0 100%); }
.secondary { left: 18px; top: 18px; background: #fff; }
.swap { left: 41px; top: 3px; }
.reset { left: 0; top: 38px; width: 14px; height: 14px; background: linear-gradient(#000, #000) 1px 1px / 8px 8px no-repeat, linear-gradient(#777, #777) 0 0 / 10px 10px no-repeat, linear-gradient(#fff, #fff) 4px 4px / 10px 10px no-repeat; }
.palette-actions { display: flex; gap: 6px; }
.palette-menu { gap: 8px; z-index: 1; }
.wheel-column { display: flex; flex-direction: column; gap: 7px; }
.less { align-self: flex-end; width: 73px; height: 21px; border: 1px solid #0078d7; border-radius: 3px; background: #fff; color: #111; }
.wheel {
  display: flex;
  align-items: center;
  justify-content: center;
  height: 141px;
  width: 141px;
  border-radius: 50%;
  background: radial-gradient(closest-side, #fff, transparent), conic-gradient(from 90deg, #f00, #ff0, #0f0, #0ff, #00f, #f0f, #f00);
}
.wheel-mark { width: 9px; height: 9px; border: 1px solid #222; border-radius: 50%; background: #fff; }
.palette { grid-column: span 2; display: grid; grid-template-columns: repeat(16, 12px); grid-auto-rows: 12px; }
.palette button { background: var(--color); }
.palette .faded { background: linear-gradient(var(--color), transparent 160%), repeating-conic-gradient(#bbb 0 25%, #888 0 50%) 0 0 / 8px 8px; }

.channels { display: flex; flex-direction: column; gap: 3px; width: 153px; }
.channel-head { display: flex; align-items: center; gap: 6px; margin-bottom: -3px; line-height: 16px; }
.channel-head::after { content: ""; flex: 1; height: 1px; margin-bottom: 3px; background: #6a6a6a; }
.alpha-head { margin: 3px 0 0; }
.channel { display: grid; grid-template-columns: 22px 75px 56px; align-items: center; height: 21px; }
.channel.hex { grid-template-columns: 97px 56px; }
.number { display: flex; height: 21px; border: 2px solid #fff; border-radius: 2px; background: #1c1c1c; }
.number input { flex: 1; min-width: 0; text-align: right; padding-right: 2px; }
.spin { display: flex; flex-direction: column; width: 14px; background: #fff; }
.spin button { flex: 1; border: 1px solid #bbb; background: #f0f0f0; }
.spin button::before { content: ""; width: 5px; height: 3px; background: #000; clip-path: polygon(50% 0, 100% 100%, 0 100%); }
.spin .low::before { clip-path: polygon(0 0, 100% 0, 50% 100%); }
.spin button:disabled { border-color: #ddd; }
.spin button:disabled::before { background: #777; }
.ramp { appearance: none; width: 67px; height: 11px; }
.ramp::-webkit-slider-thumb {
  appearance: none;
  width: 9px;
  height: 9px;
  position: relative;
  left: -4px;
  top: 6px;
  background: url("data:image/svg+xml,%3Csvg xmlns='http://www.w3.org/2000/svg' width='9' height='9'%3E%3Cpath fill='%23000' stroke='%23fff' stroke-width='1.400' d='M4.500 1.500L7.800 8H1.200z'/%3E%3C/svg%3E");
}
.ramp.alpha::-webkit-slider-thumb { left: 4px; }
.red { background: linear-gradient(90deg, #000, #f00); }
.green { background: linear-gradient(90deg, #000, #0f0); }
.blue { background: linear-gradient(90deg, #000, #00f); }
.hue { background: linear-gradient(90deg, #f00, #ff0, #0f0, #0ff, #00f, #f0f, #f00); }
.sat { background: #000; }
.val { background: linear-gradient(90deg, #000, #fff); }
.alpha { background: linear-gradient(90deg, transparent, #000), repeating-conic-gradient(#bbb 0 25%, #888 0 50%) 0 0 / 8px 8px; }

/* Status bar */
.status { display: flex; align-items: center; height: 25px; padding: 0 17px 1px 2px; background: #202020; border-bottom: 1px solid #33151c; }
.hint { flex: 1; font-size: 11px; white-space: nowrap; }
.readout { display: flex; align-items: center; width: 111px; white-space: nowrap; }
.unit { width: 38px; justify-content: flex-start; gap: 12px; }
.percent { width: 43px; }
.status button + button { margin-left: 13px; }
.zoom { appearance: none; width: 111px; height: 16px; margin: 0 8px; background: linear-gradient(#eee, #eee) center / 100% 2px no-repeat; }
.zoom::-webkit-slider-thumb { appearance: none; width: 10px; height: 15px; background: linear-gradient(#fff, #ccc); clip-path: polygon(0 0, 100% 0, 100% 70%, 50% 100%, 0 70%); }
```

FILE: script.js
```js
// Default palette: two neutral columns followed by fourteen hues per row.
const rows = [
  "000000 404040 ff0000 ff6a00 ffd800 b6ff00 4cff00 00ff21 00ff90 00ffff 0094ff 0026ff 4800ff b200ff ff00dc ff006e",
  "ffffff 808080 7f0000 7f3300 7f6a00 5b7f00 267f00 007f0e 007f46 007f7f 004a7f 00137f 21007f 57007f 7f006e 7f0037",
  "a0a0a0 303030 ff7f7f ffb27f ffe97f daff7f a5ff7f 7fff8e 7fffc5 7fffff 7fc9ff 7f92ff a17fff d67fff ff7fed ff7fb6",
  "c0c0c0 606060 7f3f3f 7f593f 7f743f 6d7f3f 527f3f 3f7f47 3f7f62 3f7f7f 3f647f 3f497f 503f7f 6b3f7f 7f3f76 7f3f5b"
];
const grid = document.getElementById("palette-grid");

function addRow(row, faded) {
  for (const hex of row.split(" ")) {
    const swatch = document.createElement("button");
    swatch.style.setProperty("--color", "#" + hex);
    swatch.setAttribute("aria-label", "#" + hex);
    if (faded) swatch.className = "faded";
    grid.append(swatch);
  }
}

rows.forEach((row) => addRow(row, false));
addRow(rows[0], true);
addRow(rows[1], true);
```
